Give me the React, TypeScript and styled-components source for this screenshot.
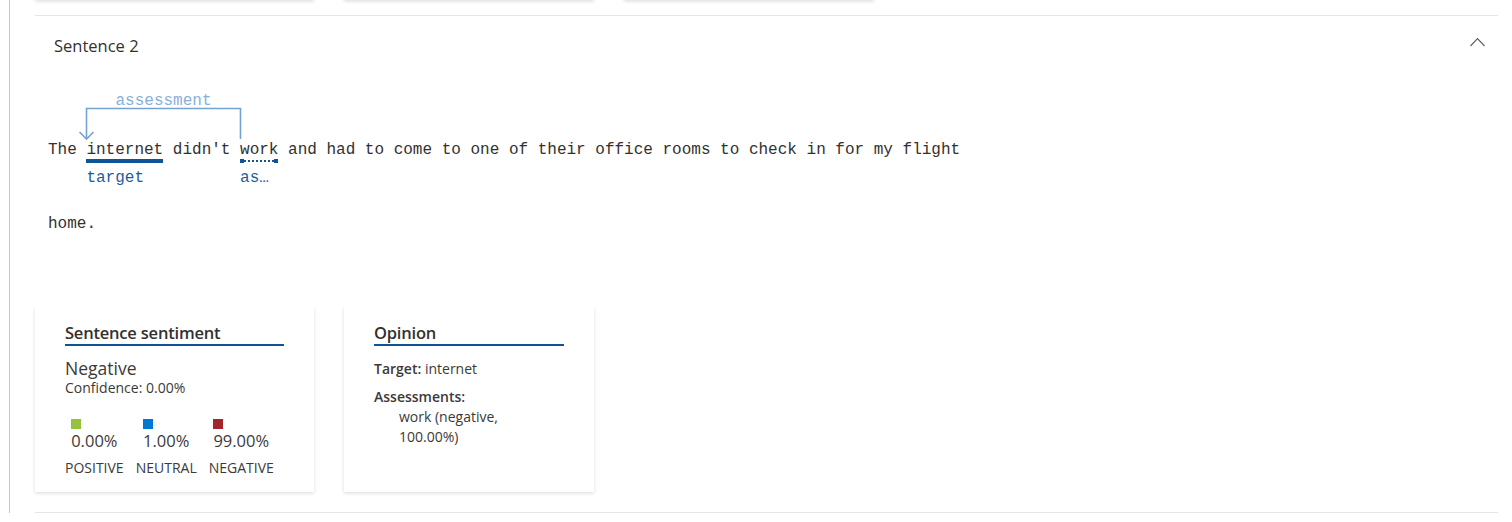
import React from 'react';
import styled, { createGlobalStyle } from 'styled-components';

const GlobalStyle = createGlobalStyle`
  html, body { margin: 0; padding: 0; background: #ffffff; }
  body {
    font-family: "Segoe UI", "Open Sans", sans-serif;
    color: #323130;
    overflow: hidden;
  }
  * { box-sizing: border-box; }
`;

const Frame = styled.div`
  margin-left: 9px;
  border-left: 1px solid #c8c6c4;
  min-height: 522px;
  padding: 0 14px 0 25px;
`;

const CardRow = styled.div<{ $offset?: number }>`
  display: flex;
  gap: 30px;
  align-items: stretch;
  margin-top: ${(p) => p.$offset ?? 0}px;
`;

const Card = styled.div<{ $w: number }>`
  width: ${(p) => p.$w}px;
  height: 186px;
  background: #ffffff;
  box-shadow: 0 1.6px 3.6px rgba(0, 0, 0, 0.132), 0 0.3px 0.9px rgba(0, 0, 0, 0.108);
  padding: 16px 30px 15px;
  display: flex;
  flex-direction: column;
`;

const PrevCard = styled(Card)`
  height: 20px;
  padding: 0;
`;

const Divider = styled.div<{ $top: number }>`
  height: 1px;
  background: #e6e5e4;
  margin-top: ${(p) => p.$top}px;
`;

const Header = styled.div`
  height: 58px;
  display: flex;
  align-items: center;
  justify-content: space-between;
  padding: 0 13px 0 19px;
`;

const HeaderTitle = styled.span`
  font-size: 16.5px;
  color: #323130;
`;

const Chevron = styled.svg`
  width: 15px;
  height: 10px;
  margin-bottom: 6px;
  color: #605e5c;
`;

const SentenceArea = styled.div`
  padding-left: 13px;
  font-family: "Liberation Mono", "DejaVu Sans Mono", monospace;
  font-size: 16px;
  color: #323130;
`;

const Line = styled.div<{ $top: number }>`
  position: relative;
  padding-top: ${(p) => p.$top}px;
  padding-bottom: 54px;
  line-height: 20px;
  height: ${(p) => p.$top + 20 + 54}px;
  white-space: pre;
`;

const ArcLayer = styled.svg`
  position: absolute;
  left: 0;
  top: 0;
  width: 320px;
  height: 68px;
  overflow: visible;
`;

const ArcLabel = styled.span<{ $left: number; $width: number }>`
  position: absolute;
  top: 17px;
  left: ${(p) => p.$left}px;
  width: ${(p) => p.$width}px;
  text-align: center;
  line-height: 20px;
  color: #88b0d8;
`;

const Token = styled.span`
  position: relative;
  display: inline-block;
`;

const Marker = styled.span<{ $dotted?: boolean }>`
  position: absolute;
  left: 0;
  right: 0;
  top: 19px;
  height: 4px;
  background: ${(p) =>
    p.$dotted
      ? 'repeating-linear-gradient(to right, #0f5499 0 2px, transparent 2px 4px)'
      : '#0f5499'};
  background-size: 100% 2px;
  background-position: 0 1px;
  background-repeat: no-repeat;
  &::before,
  &::after {
    content: '';
    position: absolute;
    top: 0;
    width: 4px;
    height: 4px;
    background: #0f5499;
  }
  &::before { left: 0; }
  &::after { right: 0; }
`;

const TokenLabel = styled.span`
  position: absolute;
  left: 0;
  top: 28px;
  line-height: 20px;
  color: #1b5e9e;
  white-space: nowrap;
`;

const CardTitle = styled.div`
  font-size: 16.5px;
  font-weight: 600;
  line-height: 22px;
  color: #323130;
  border-bottom: 2px solid #0f5499;
  letter-spacing: -0.2px;
`;

const BigValue = styled.div`
  margin-top: 10px;
  font-size: 17.5px;
  line-height: 24px;
  color: #3b3a39;
`;

const SmallText = styled.div`
  font-size: 14px;
  line-height: 16px;
  color: #3b3a39;
`;

const Legend = styled.div`
  display: flex;
  gap: 12px;
  margin-top: 23px;
`;

const LegendCol = styled.div`
  display: flex;
  flex-direction: column;
  align-items: center;
`;

const Swatch = styled.div<{ $color: string }>`
  width: 10px;
  height: 10px;
  background: ${(p) => p.$color};
`;

const LegendValue = styled.div`
  margin-top: 2px;
  font-size: 16.5px;
  line-height: 20px;
  color: #3b3a39;
`;

const LegendLabel = styled.div`
  margin-top: 8px;
  font-size: 14px;
  line-height: 18px;
  color: #3b3a39;
  text-transform: uppercase;
`;

const Field = styled.div<{ $top: number; $indent?: number; $max?: number }>`
  margin-top: ${(p) => p.$top}px;
  padding-left: ${(p) => p.$indent ?? 0}px;
  max-width: ${(p) => (p.$max ? `${p.$max}px` : 'none')};
  font-size: 14px;
  line-height: 20px;
  color: #3b3a39;
`;

const FieldKey = styled.span`
  font-weight: 600;
`;

const legend = [
  { color: '#95c23d', value: '0.00%', label: 'Positive' },
  { color: '#0078d4', value: '1.00%', label: 'Neutral' },
  { color: '#a4262c', value: '99.00%', label: 'Negative' },
];

export default function App() {
  return (
    <>
      <GlobalStyle />
      <Frame>
        <CardRow $offset={-20}>
          <PrevCard $w={279} />
          <PrevCard $w={250} />
          <PrevCard $w={250} />
        </CardRow>
        <Divider $top={15} />
        <Header>
          <HeaderTitle>Sentence 2</HeaderTitle>
          <Chevron viewBox="0 0 15 10" fill="none">
            <polyline points="0.5,9 7.5,1.5 14.5,9" stroke="currentColor" strokeWidth="1.1" />
          </Chevron>
        </Header>
        <SentenceArea>
          <Line $top={66}>
            <ArcLayer viewBox="0 0 320 68">
              <path
                d="M192.5 65 V34.5 H38.5 V65"
                stroke="#74a3d1"
                strokeWidth="1.6"
                fill="none"
              />
              <polyline points="31.5,58 38.5,65 45.5,58" stroke="#74a3d1" strokeWidth="1.6" fill="none" />
            </ArcLayer>
            <ArcLabel $left={38.5} $width={154}>assessment</ArcLabel>
            {'The '}
            <Token>
              internet
              <Marker />
              <TokenLabel>target</TokenLabel>
            </Token>
            {" didn't "}
            <Token>
              work
              <Marker $dotted />
              <TokenLabel>as…</TokenLabel>
            </Token>
            {' and had to come to one of their office rooms to check in for my flight'}
          </Line>
          <Line $top={0}>home.</Line>
        </SentenceArea>
        <CardRow $offset={18}>
          <Card $w={279}>
            <CardTitle>Sentence sentiment</CardTitle>
            <BigValue>Negative</BigValue>
            <SmallText>Confidence: 0.00%</SmallText>
            <Legend>
              {legend.map((l) => (
                <LegendCol key={l.label}>
                  <div>
                    <Swatch $color={l.color} />
                    <LegendValue>{l.value}</LegendValue>
                  </div>
                  <LegendLabel>{l.label}</LegendLabel>
                </LegendCol>
              ))}
            </Legend>
          </Card>
          <Card $w={250}>
            <CardTitle>Opinion</CardTitle>
            <Field $top={13}>
              <FieldKey>Target:</FieldKey> internet
            </Field>
            <Field $top={8}>
              <FieldKey>Assessments:</FieldKey>
            </Field>
            <Field $top={0} $indent={25} $max={140}>
              work (negative, 100.00%)
            </Field>
          </Card>
        </CardRow>
        <Divider $top={20} />
      </Frame>
    </>
  );
}
